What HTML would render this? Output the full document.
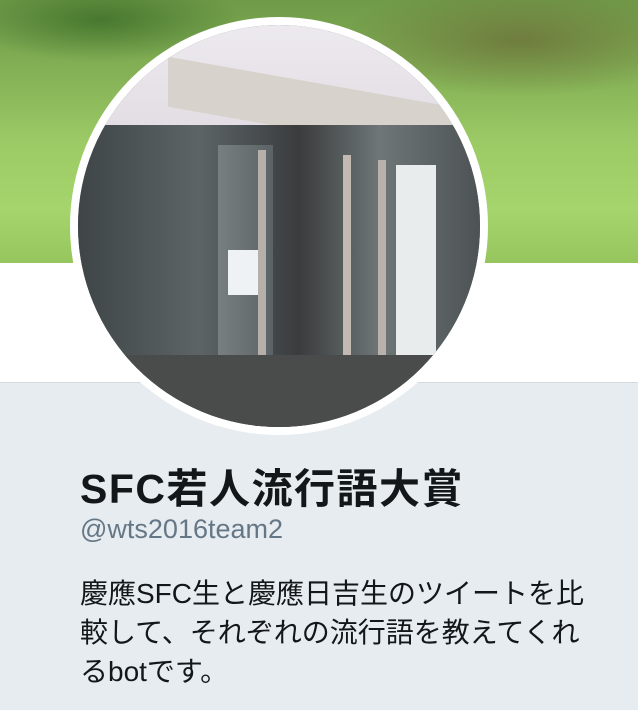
<!DOCTYPE html>
<html><head><meta charset="utf-8"><style>
*{margin:0;padding:0;box-sizing:border-box}
body{width:638px;height:710px;overflow:hidden;background:#e6ecf0;position:relative;font-family:"Liberation Sans","Noto Sans CJK JP",sans-serif}
.banner{position:absolute;left:0;top:0;width:638px;height:263px;
background:
radial-gradient(ellipse 260px 80px at 520px 40px,rgba(110,120,60,.9),rgba(110,120,60,0) 70%),
radial-gradient(ellipse 200px 60px at 100px 20px,rgba(60,110,40,.8),rgba(60,110,40,0) 70%),
linear-gradient(180deg,#6f9a48 0%,#86b357 30%,#9ccb66 55%,#a6d46c 80%,#96c55e 100%)}
.white{position:absolute;left:0;top:263px;width:638px;height:120px;background:#fff;border-bottom:1px solid #d4dbe0}
.av{position:absolute;left:70px;top:17px;width:418px;height:418px;border-radius:50%;background:#fff;padding:8px}
.ph{width:100%;height:100%;border-radius:50%;overflow:hidden;position:relative;background:#55595a}
.ph div{position:absolute}
h1{position:absolute;left:80px;top:455px;font-size:41px;font-weight:bold;color:#14171a;letter-spacing:1.5px;white-space:nowrap}
.h{position:absolute;left:80px;top:514px;font-size:27px;color:#657786}
.bio{position:absolute;left:80px;top:574px;font-size:28px;line-height:39px;color:#14171a;white-space:nowrap}
</style></head><body>
<div class="banner"></div>
<div class="white"></div>
<div class="av"><div class="ph">
<div style="left:0;top:0;width:402px;height:110px;background:linear-gradient(180deg,#ece9ef,#e2dde3)"></div>
<div style="left:90px;top:60px;width:320px;height:50px;background:#d7d2cc;transform:skewY(10deg)"></div>
<div style="left:0;top:100px;width:402px;height:302px;background:linear-gradient(90deg,#3f4547,#5c6466 30%,#3a3c3d 55%,#6e7677 75%,#4d5355)"></div>
<div style="left:140px;top:120px;width:55px;height:260px;background:linear-gradient(90deg,#777f82,#5c6365)"></div>
<div style="left:180px;top:125px;width:8px;height:280px;background:#b7b0aa"></div>
<div style="left:265px;top:130px;width:8px;height:270px;background:#c1b9b2"></div>
<div style="left:300px;top:135px;width:8px;height:260px;background:#b9b2ab"></div>
<div style="left:318px;top:140px;width:40px;height:200px;background:#e8ecec"></div>
<div style="left:150px;top:225px;width:30px;height:45px;background:#eef2f5"></div>
<div style="left:0;top:330px;width:402px;height:72px;background:#4a4b4b"></div>
</div></div>
<h1>SFC若人流行語大賞</h1>
<div class="h">@wts2016team2</div>
<div class="bio">慶應SFC生と慶應日吉生のツイートを比<br>較して、それぞれの流行語を教えてくれ<br>るbotです。</div>
</body></html>
